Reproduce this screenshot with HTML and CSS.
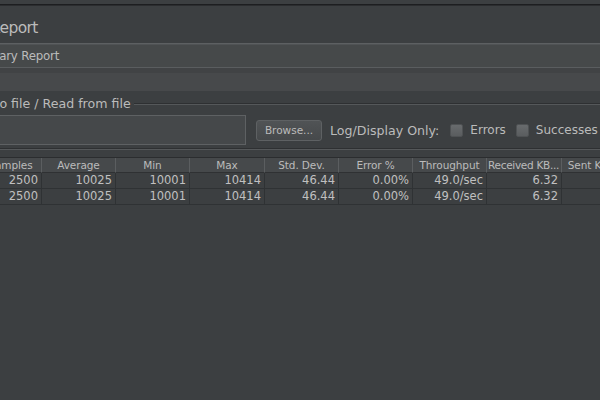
FILE: index.html
```html
<!DOCTYPE html>
<html>
<head>
<meta charset="utf-8">
<link rel="stylesheet" href="styles.css">
</head>
<body>
<div class="app">
  <div class="topbar"></div>
  <h1 class="title">Summary Report</h1>
  <div class="name-field">Summary Report</div>
  <div class="comments-wrap"><div class="comments-field"></div></div>
  <div class="filebox">
    <div class="legend"><span class="legend-text">Write results to file / Read from file</span><span class="legend-line"></span></div>
    <div class="file-row">
      <div class="file-input"></div>
      <button class="btn">Browse...</button>
      <span class="lbl lbl-log">Log/Display Only:</span>
      <span class="cb cb-errors"></span>
      <span class="lbl lbl-errors">Errors</span>
      <span class="cb cb-succ"></span>
      <span class="lbl lbl-succ">Successes</span>
    </div>
  </div>
  <div class="table-wrap">
    <div class="grid">
      <div class="th"># Samples</div>
      <div class="th">Average</div>
      <div class="th">Min</div>
      <div class="th">Max</div>
      <div class="th">Std. Dev.</div>
      <div class="th">Error %</div>
      <div class="th">Throughput</div>
      <div class="th th-clip">Received KB...</div>
      <div class="th">Sent KB/sec</div>

      <div class="td">2500</div>
      <div class="td">10025</div>
      <div class="td">10001</div>
      <div class="td">10414</div>
      <div class="td">46.44</div>
      <div class="td">0.00%</div>
      <div class="td">49.0/sec</div>
      <div class="td">6.32</div>
      <div class="td">5.84</div>

      <div class="td">2500</div>
      <div class="td">10025</div>
      <div class="td">10001</div>
      <div class="td">10414</div>
      <div class="td">46.44</div>
      <div class="td">0.00%</div>
      <div class="td">49.0/sec</div>
      <div class="td">6.32</div>
      <div class="td">5.84</div>
    </div>
  </div>
</div>
</body>
</html>
```
FILE: styles.css
```css
html, body {
  margin: 0;
  padding: 0;
}
body {
  width: 600px;
  height: 400px;
  overflow: hidden;
  background: #3c3f41;
  color: #bbbbbb;
  font-family: "DejaVu Sans", "Liberation Sans", sans-serif;
}
.app {
  width: 600px;
}
.topbar {
  height: 4px;
  border-bottom: 1px solid #1d1e20;
}
.title {
  margin: 0;
  border-top: 1px solid #2b2d2f;
  height: 29px;
  padding-top: 8px;
  font-weight: normal;
  font-size: 15.5px;
  letter-spacing: -0.6px;
  line-height: 29px;
  text-indent: -85px;
  white-space: nowrap;
  color: #bbbbbb;
}
.name-field {
  height: 21px;
  padding-top: 2px;
  line-height: 21px;
  border-top: 1px solid #5d6062;
  border-bottom: 1px solid #5a5d5f;
  background: #46494a;
  box-shadow: inset 0 1px 0 #505355;
  font-size: 11.8px;
  letter-spacing: -0.2px;
  text-indent: -38px;
  white-space: nowrap;
}
.comments-wrap {
  padding-top: 5px;
  background: #414345;
}
.comments-field {
  height: 18px;
  background: #47494b;
}
.filebox {
  padding-top: 6px;
  padding-bottom: 3px;
  border-bottom: 1px solid #2e3032;
}
.legend {
  display: flex;
  align-items: center;
  height: 14px;
}
.legend-text {
  margin-left: -89px;
  font-size: 12.6px;
  line-height: 14px;
  white-space: nowrap;
}
.legend-line {
  flex: 1;
  height: 0;
  margin-left: 3px;
  border-top: 1px solid #2e3032;
  border-bottom: 1px solid #55585a;
}
.file-row {
  display: flex;
  align-items: center;
  height: 30px;
  margin-top: 4px;
  white-space: nowrap;
}
.file-input {
  flex: none;
  width: 248px;
  height: 30px;
  box-sizing: border-box;
  margin-left: -2px;
  border: 1px solid #5e6163;
  background: #45484a;
}
.btn {
  flex: none;
  margin: 0 0 0 10px;
  padding: 0;
  width: 66px;
  height: 21px;
  box-sizing: border-box;
  border: 1px solid #5e6163;
  border-radius: 3px;
  background: linear-gradient(#505355, #46494b);
  color: #bbbbbb;
  font-family: "DejaVu Sans", sans-serif;
  font-size: 10.5px;
  line-height: 19px;
}
.lbl {
  font-size: 12.6px;
  flex: none;
}
.lbl-log {
  margin-left: 8px;
}
.lbl-errors {
  margin-left: 7px;
  font-size: 12px;
}
.lbl-succ {
  margin-left: 7px;
  font-size: 12px;
}
.cb {
  flex: none;
  width: 13px;
  height: 13px;
  box-sizing: border-box;
  border: 1px solid #4f5254;
  border-radius: 2px;
  background: linear-gradient(#686b6d, #5a5d5f);
}
.cb-errors {
  margin-left: 11px;
}
.cb-succ {
  margin-left: 10px;
}
.table-wrap {
  border-top: 1px solid #55585a;
  padding-top: 7px;
}
.grid {
  display: grid;
  grid-template-columns: 74px 74px 74px 75px 74px 74px 74px 75px 74px;
  width: max-content;
  margin-left: -32px;
  border-top: 1px solid #2b2d2f;
}
.th {
  box-sizing: border-box;
  height: 15px;
  line-height: 14px;
  padding: 0;
  background: #46494b;
  border-right: 1px solid #5b5e60;
  border-bottom: 1px solid #2f3133;
  text-align: center;
  font-size: 10.5px;
  letter-spacing: -0.1px;
  white-space: nowrap;
  overflow: hidden;
}
.th-clip {
  text-align: left;
  padding-left: 1px;
  letter-spacing: -0.3px;
}
.td {
  box-sizing: border-box;
  height: 16px;
  line-height: 15px;
  padding-right: 3px;
  border-right: 1px solid #2f3234;
  border-bottom: 1px solid #2f3234;
  text-align: right;
  font-size: 11.5px;
  white-space: nowrap;
  color: #c0c0c0;
}
```
